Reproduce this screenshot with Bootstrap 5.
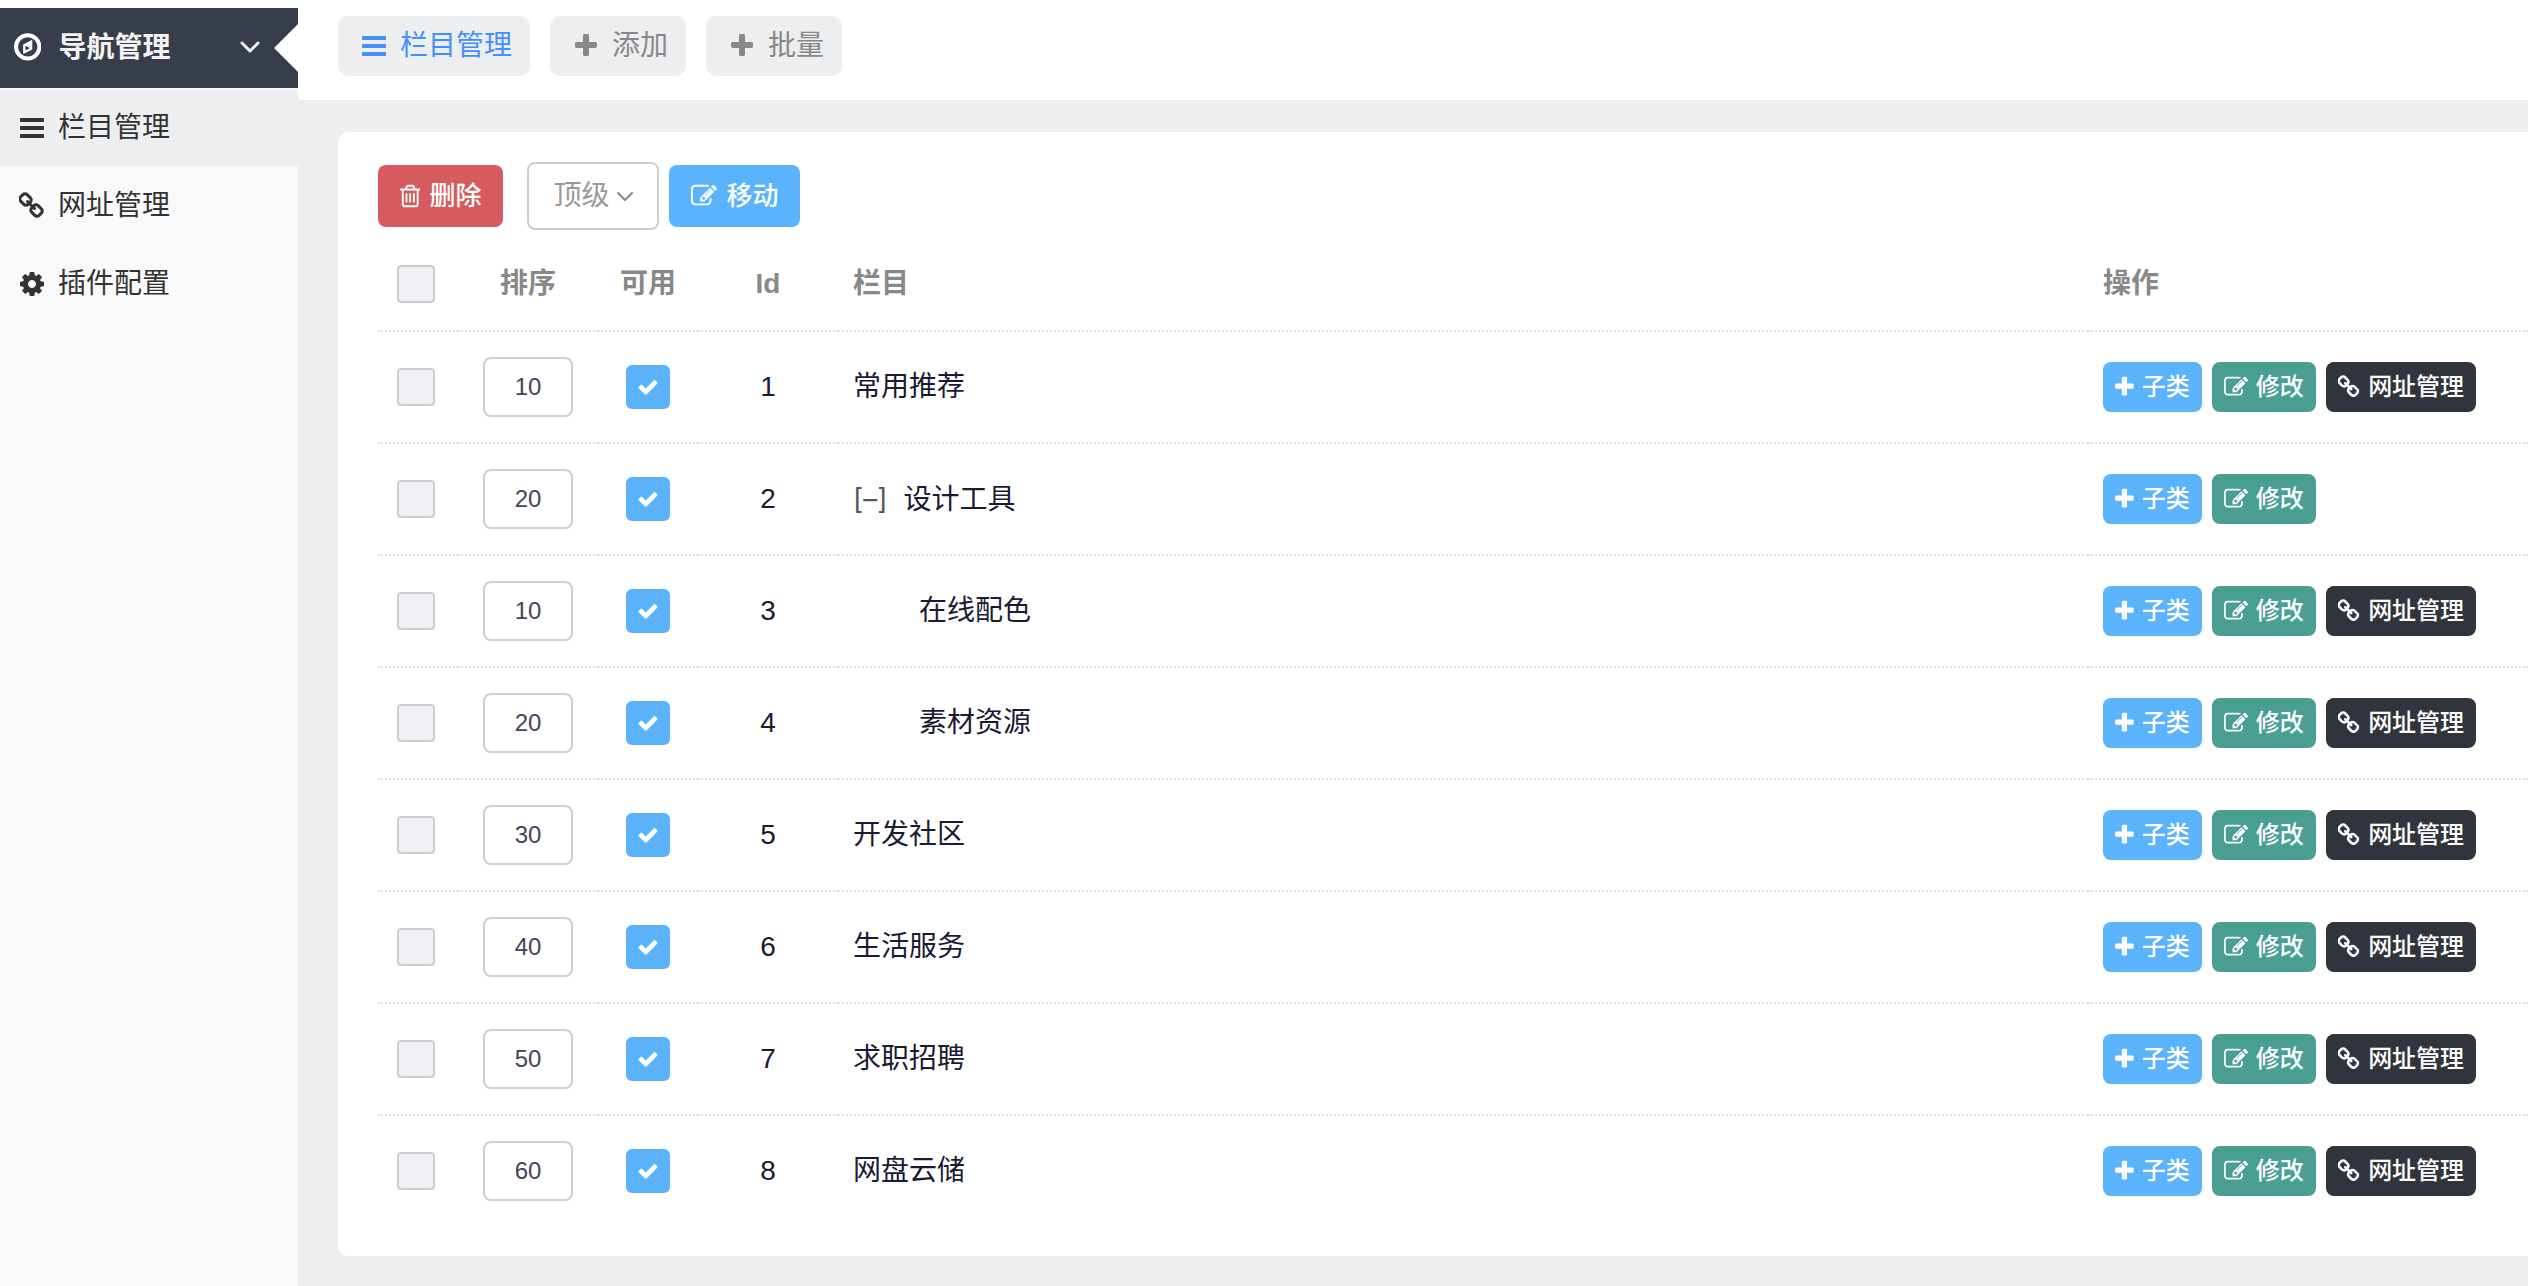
<!DOCTYPE html>
<html lang="zh-CN">
<head>
<meta charset="utf-8">
<meta name="viewport" content="width=device-width, initial-scale=1">
<title>导航管理</title>
<link href="https://cdn.jsdelivr.net/npm/bootstrap@5.3.0/dist/css/bootstrap.min.css" rel="stylesheet">
<style>
  body { font-family: "Liberation Sans", "Noto Sans CJK SC", sans-serif; font-size: 28px; line-height: 40px; color: #1a1a33; background: #fff; }
  a { text-decoration: none; }
  .ico { height: 1em; width: auto; fill: currentColor; flex: none; }
  .ico-slot { width: 36px; display: flex; justify-content: center; flex: none; }
  .shell { padding-top: 8px; min-height: 100vh; }
  .side { width: 298px; background: #f9f9f9; gap: 2px; }
  .side-title { height: 80px; background: #373d4b; color: #f3f3f3; padding: 0 38px 0 14px; border: 0; position: relative; font-weight: 700; gap: 17px; }
  .side-title .compass { height: 32px; width: auto; fill: #fff; }
  .side-title::after { content: ""; position: absolute; right: 0; top: 16px; border: 24px solid transparent; border-left: 0; border-right-color: #fff; }
  .side-link { height: 76px; padding: 0 14px; gap: 8px; color: #333; }
  .side-link.active { background: #edeef0; }
  .main-area { background: #edeef0; min-width: 0; }
  .tabs-bar { height: 92px; background: #fff; padding: 8px 40px; gap: 20px; border-bottom-left-radius: 4px; }
  .tab-btn { height: 60px; padding: 0 18px; gap: 8px; border-radius: 10px; background: #edeef0; color: #888; }
  .tab-btn.active { color: #458ffc; }
  .panel { background: #fff; margin: 32px 0 30px 40px; padding: 30px 0 28px 40px; border-radius: 10px 0 0 10px; }
  .tool-row { height: 68px; }
  .tool-btn { height: 62px; padding: 0 22px; border: 0; border-radius: 8px; font-size: 26px; font-weight: 500; gap: 9px; color: #fff; }
  .bg-del { background: #d55b5e; }
  .bg-sky { background: #5ab3fb; }
  .bg-teal { background: #489f92; }
  .bg-ink { background: #30343d; }
  .level-box { height: 68px; width: 132px; position: relative; margin: 0 10px 0 24px; }
  .level-box select { appearance: none; width: 100%; height: 100%; padding: 0 0 0 24px; border: 2px solid #d2cdce; border-radius: 8px; background: #fff; color: #999; }
  .level-box .chev { position: absolute; right: 25px; top: 29px; color: #888; pointer-events: none; }
  .chev { fill: none; stroke: currentColor; stroke-linecap: round; stroke-linejoin: round; }
  .cat-table { table-layout: fixed; width: 100%; margin: 0; border-collapse: separate; border-spacing: 0; }
  .cat-table th, .cat-table td { padding: 0 15px; height: 112px; vertical-align: middle; border-bottom: 2px dotted #e0e0e2; }
  .cat-table .mid { text-align: center; padding-left: 0; padding-right: 0; }
  .cat-table thead th { height: 102px; color: #888; font-weight: 700; padding-top: 8px; }
  .cat-table tbody tr:last-child td { border-bottom-color: transparent; }
  .pick { appearance: none; display: block; width: 38px; height: 38px; margin: 0 0 0 19px; border: 2px solid #d0cdce; border-radius: 4px; background: #f0f1f5; }
  .sort-input { display: block; width: 90px; height: 60px; margin: 0 auto; border: 2px solid #d2cdce; border-radius: 8px; text-align: center; font-size: 24px; color: #444459; background: #fff; }
  .on-btn { width: 44px; height: 44px; border: 0; border-radius: 6px; color: #fff; font-size: 22px; margin: 0 auto; padding: 0; }
  .fold { padding: 0; border: 0; background: none; color: #555566; margin-right: 16px; font-family: Inter, sans-serif; }
  .sub-name { padding-left: 66px; }
  .act-row { gap: 10px; }
  .act { height: 50px; padding: 0 12px; gap: 8px; border-radius: 8px; font-size: 24px; font-weight: 500; color: #fff; }
  .w-pick { width: 80px; } .w-sort, .w-id { width: 140px; } .w-on { width: 100px; } .w-act { width: 440px; }
</style>
</head>
<body>
<svg class="d-none" aria-hidden="true">
  <symbol id="i-bars" viewBox="128 0 1536 1792"><path d="M1664 1344v128q0 26-19 45t-45 19h-1408q-26 0-45-19t-19-45v-128q0-26 19-45t45-19h1408q26 0 45 19t19 45zm0-512v128q0 26-19 45t-45 19h-1408q-26 0-45-19t-19-45v-128q0-26 19-45t45-19h1408q26 0 45 19t19 45zm0-512v128q0 26-19 45t-45 19h-1408q-26 0-45-19t-19-45v-128q0-26 19-45t45-19h1408q26 0 45 19t19 45z"/></symbol>
  <symbol id="i-plus" viewBox="192 0 1408 1792"><path d="M1600 736v192q0 40-28 68t-68 28h-416v416q0 40-28 68t-68 28h-192q-40 0-68-28t-28-68v-416h-416q-40 0-68-28t-28-68v-192q0-40 28-68t68-28h416v-416q0-40 28-68t68-28h192q40 0 68 28t28 68v416h416q40 0 68 28t28 68z"/></symbol>
  <symbol id="i-cog" viewBox="128 0 1536 1792"><path d="M1152 896q0-106-75-181t-181-75-181 75-75 181 75 181 181 75 181-75 75-181zm512-109v222q0 12-8 23t-20 13l-185 28q-19 54-39 91 35 50 107 138 10 12 10 25t-9 23q-27 37-99 108t-94 71q-12 0-26-9l-138-108q-44 23-91 38-16 136-29 186-7 28-36 28h-222q-14 0-24.500-8.500t-11.500-21.500l-28-184q-49-16-90-37l-141 107q-10 9-25 9-14 0-25-11-126-114-165-168-7-10-7-23 0-12 8-23 15-21 51-66.500t54-70.500q-27-50-41-99l-183-27q-13-2-21-12.500t-8-23.500v-222q0-12 8-23t19-13l186-28q14-46 39-92-40-57-107-138-10-12-10-24 0-10 9-23 26-36 98.500-107.500t94.500-71.500q13 0 26 10l138 107q44-23 91-38 16-136 29-186 7-28 36-28h222q14 0 24.500 8.500t11.500 21.500l28 184q49 16 90 37l142-107q9-9 24-9 13 0 25 10 129 119 165 170 7 8 7 22 0 12-8 23-15 21-51 66.500t-54 70.500q26 50 41 98l183 28q13 2 21 12.500t8 23.500z"/></symbol>
  <symbol id="i-check" viewBox="0 0 1792 1792"><path d="M1671 566q0 40-28 68l-724 724-136 136q-28 28-68 28t-68-28l-136-136-362-362q-28-28-28-68t28-68l136-136q28-28 68-28t68 28l294 295 656-657q28-28 68-28t68 28l136 136q28 28 28 68z"/></symbol>
  <symbol id="i-trash" viewBox="192 0 1408 1792"><path d="M704 736v576q0 14-9 23t-23 9h-64q-14 0-23-9t-9-23v-576q0-14 9-23t23-9h64q14 0 23 9t9 23zm256 0v576q0 14-9 23t-23 9h-64q-14 0-23-9t-9-23v-576q0-14 9-23t23-9h64q14 0 23 9t9 23zm256 0v576q0 14-9 23t-23 9h-64q-14 0-23-9t-9-23v-576q0-14 9-23t23-9h64q14 0 23 9t9 23zm128 724v-948h-896v948q0 22 7 40.500t14.500 27 10.500 8.500h832q3 0 10.500-8.500t14.500-27 7-40.500zm-672-1076h448l-48-117q-7-9-17-11h-317q-10 2-17 11zm928 32v64q0 14-9 23t-23 9h-96v948q0 83-47 143.500t-113 60.500h-832q-66 0-113-58.500t-47-141.500v-952h-96q-14 0-23-9t-9-23v-64q0-14 9-23t23-9h309l70-167q15-37 54-63t79-26h320q40 0 79 26t54 63l70 167h309q14 0 23 9t9 23z"/></symbol>
  <symbol id="i-link" viewBox="64 0 1664 1792"><path d="M1456 1216q0-40-28-68l-208-208q-28-28-68-28-42 0-72 32 3 3 19 18.500t21.500 21.500 15 19 13 25.500 3.500 27.500q0 40-28 68t-68 28q-15 0-27.500-3.500t-25.500-13-19-15-21.500-21.500-18.500-19q-33 31-33 73 0 40 28 68l206 207q27 27 68 27 40 0 68-26l147-146q28-28 28-67zm-703-705q0-40-28-68l-206-207q-28-28-68-28-39 0-68 27l-147 146q-28 28-28 67 0 40 28 68l208 208q27 27 68 27 42 0 72-31-3-3-19-18.500t-21.500-21.500-15-19-13-25.500-3.500-27.500q0-40 28-68t68-28q15 0 27.500 3.500t25.500 13 19 15 21.500 21.500 18.500 19q33-31 33-73zm895 705q0 120-85 203l-147 146q-83 83-203 83-121 0-204-85l-206-207q-83-83-83-203 0-123 88-209l-88-88q-86 88-208 88-120 0-204-84l-208-208q-84-84-84-204t85-203l147-146q83-83 203-83 121 0 204 85l206 207q83 83 83 203 0 123-88 209l88 88q86-88 208-88 120 0 204 84l208 208q84 84 84 204z"/></symbol>
  <symbol id="i-edit" viewBox="0 0 1792 1792"><path d="M888 1184l116-116-152-152-116 116v56h96v96h56zm440-720q-16-16-33 1l-350 350q-17 17-1 33t33-1l350-350q17-17 1-33zm80 594v190q0 119-84.500 203.500t-203.500 84.500h-832q-119 0-203.500-84.500t-84.500-203.500v-832q0-119 84.500-203.500t203.500-84.500h832q63 0 117 25 15 7 18 23 3 17-9 29l-49 49q-14 14-32 8-23-6-45-6h-832q-66 0-113 47t-47 113v832q0 66 47 113t113 47h832q66 0 113-47t47-113v-126q0-13 9-22l64-64q15-15 35-7t20 29zm-96-738l288 288-672 672h-288v-288zm444 132l-92 92-288-288 92-92q28-28 68-28t68 28l152 152q28 28 28 68t-28 68z"/></symbol>
</svg>

<div class="shell d-flex">
  <aside class="side d-flex flex-column flex-shrink-0">
    <button type="button" class="side-title d-flex align-items-center" aria-expanded="true">
      <svg class="compass" viewBox="128 64 1536 1792" aria-hidden="true"><path fill-rule="evenodd" d="M896 128a768 768 0 1 1 0 1536a768 768 0 1 1 0-1536zM896 352a544 544 0 1 0 0 1088a544 544 0 1 0 0-1088z"/><path fill-rule="evenodd" d="M1152 503v542l-512 256V759zM768 1094v-256l256 128z"/></svg>
      <span>导航管理</span>
      <svg class="chev ms-auto" width="20" height="16" viewBox="0 0 20 16" stroke-width="3" aria-hidden="true"><path d="M2 3l8 8 8-8"/></svg>
    </button>
    <a class="side-link active d-flex align-items-center" href="#"><span class="ico-slot"><svg class="ico" viewBox="0 0 24 28"><use href="#i-bars"/></svg></span>栏目管理</a>
    <a class="side-link d-flex align-items-center" href="#"><span class="ico-slot"><svg class="ico" viewBox="0 0 26 28"><use href="#i-link"/></svg></span>网址管理</a>
    <a class="side-link d-flex align-items-center" href="#"><span class="ico-slot"><svg class="ico" viewBox="0 0 24 28"><use href="#i-cog"/></svg></span>插件配置</a>
  </aside>

  <main class="main-area flex-grow-1">
    <nav class="tabs-bar d-flex">
      <a class="tab-btn active d-flex align-items-center" href="#"><span class="ico-slot"><svg class="ico" viewBox="0 0 24 28"><use href="#i-bars"/></svg></span>栏目管理</a>
      <a class="tab-btn d-flex align-items-center" href="#"><span class="ico-slot"><svg class="ico" viewBox="0 0 22 28"><use href="#i-plus"/></svg></span>添加</a>
      <a class="tab-btn d-flex align-items-center" href="#"><span class="ico-slot"><svg class="ico" viewBox="0 0 22 28"><use href="#i-plus"/></svg></span>批量</a>
    </nav>

    <section class="panel">
      <div class="tool-row d-flex align-items-center">
        <button type="button" class="tool-btn bg-del d-flex align-items-center"><svg class="ico" viewBox="0 0 22 28"><use href="#i-trash"/></svg>删除</button>
        <div class="level-box">
          <select aria-label="上级栏目"><option>顶级</option></select>
          <svg class="chev" width="18" height="12" viewBox="0 0 18 12" stroke-width="2" aria-hidden="true"><path d="M2 2l7 7 7-7"/></svg>
        </div>
        <button type="button" class="tool-btn bg-sky d-flex align-items-center"><svg class="ico" viewBox="0 0 28 28"><use href="#i-edit"/></svg>移动</button>
      </div>

      <table class="cat-table">
        <colgroup><col class="w-pick"><col class="w-sort"><col class="w-on"><col class="w-id"><col><col class="w-act"></colgroup>
        <thead>
          <tr>
            <th class="mid"><input type="checkbox" class="pick" aria-label="全选"></th>
            <th class="mid">排序</th><th class="mid">可用</th><th class="mid">Id</th><th>栏目</th><th>操作</th>
          </tr>
        </thead>
        <tbody id="rows"></tbody>
      </table>
    </section>
  </main>
</div>

<script src="https://cdn.jsdelivr.net/npm/bootstrap@5.3.0/dist/js/bootstrap.bundle.min.js"></script>
<script>
  const items = [
    { id: 1, sort: 10, name: '常用推荐' },
    { id: 2, sort: 20, name: '设计工具', parent: true },
    { id: 3, sort: 10, name: '在线配色', child: true },
    { id: 4, sort: 20, name: '素材资源', child: true },
    { id: 5, sort: 30, name: '开发社区' },
    { id: 6, sort: 40, name: '生活服务' },
    { id: 7, sort: 50, name: '求职招聘' },
    { id: 8, sort: 60, name: '网盘云储' }
  ];
  const icon = (n, w) => `<svg class="ico" viewBox="0 0 ${w} 28" aria-hidden="true"><use href="#i-${n}"/></svg>`;
  const act = (n, w, bg, t) => `<a href="#" class="act ${bg} d-flex align-items-center">${icon(n, w)}${t}</a>`;
  document.getElementById('rows').innerHTML = items.map(r => `
    <tr>
      <td class="mid"><input type="checkbox" class="pick" aria-label="选择 ${r.name}"></td>
      <td class="mid"><input type="text" class="sort-input" value="${r.sort}" aria-label="排序 ${r.name}"></td>
      <td class="mid"><button type="button" class="on-btn bg-sky d-flex align-items-center justify-content-center" aria-label="可用">${icon('check', 28)}</button></td>
      <td class="mid">${r.id}</td>
      <td>${r.parent ? '<button type="button" class="fold">[–]</button>' : ''}<span class="${r.child ? 'sub-name' : ''}">${r.name}</span></td>
      <td><div class="act-row d-flex">${act('plus', 22, 'bg-sky', '子类')}${act('edit', 28, 'bg-teal', '修改')}${r.parent ? '' : act('link', 26, 'bg-ink', '网址管理')}</div></td>
    </tr>`).join('');
</script>
</body>
</html>
